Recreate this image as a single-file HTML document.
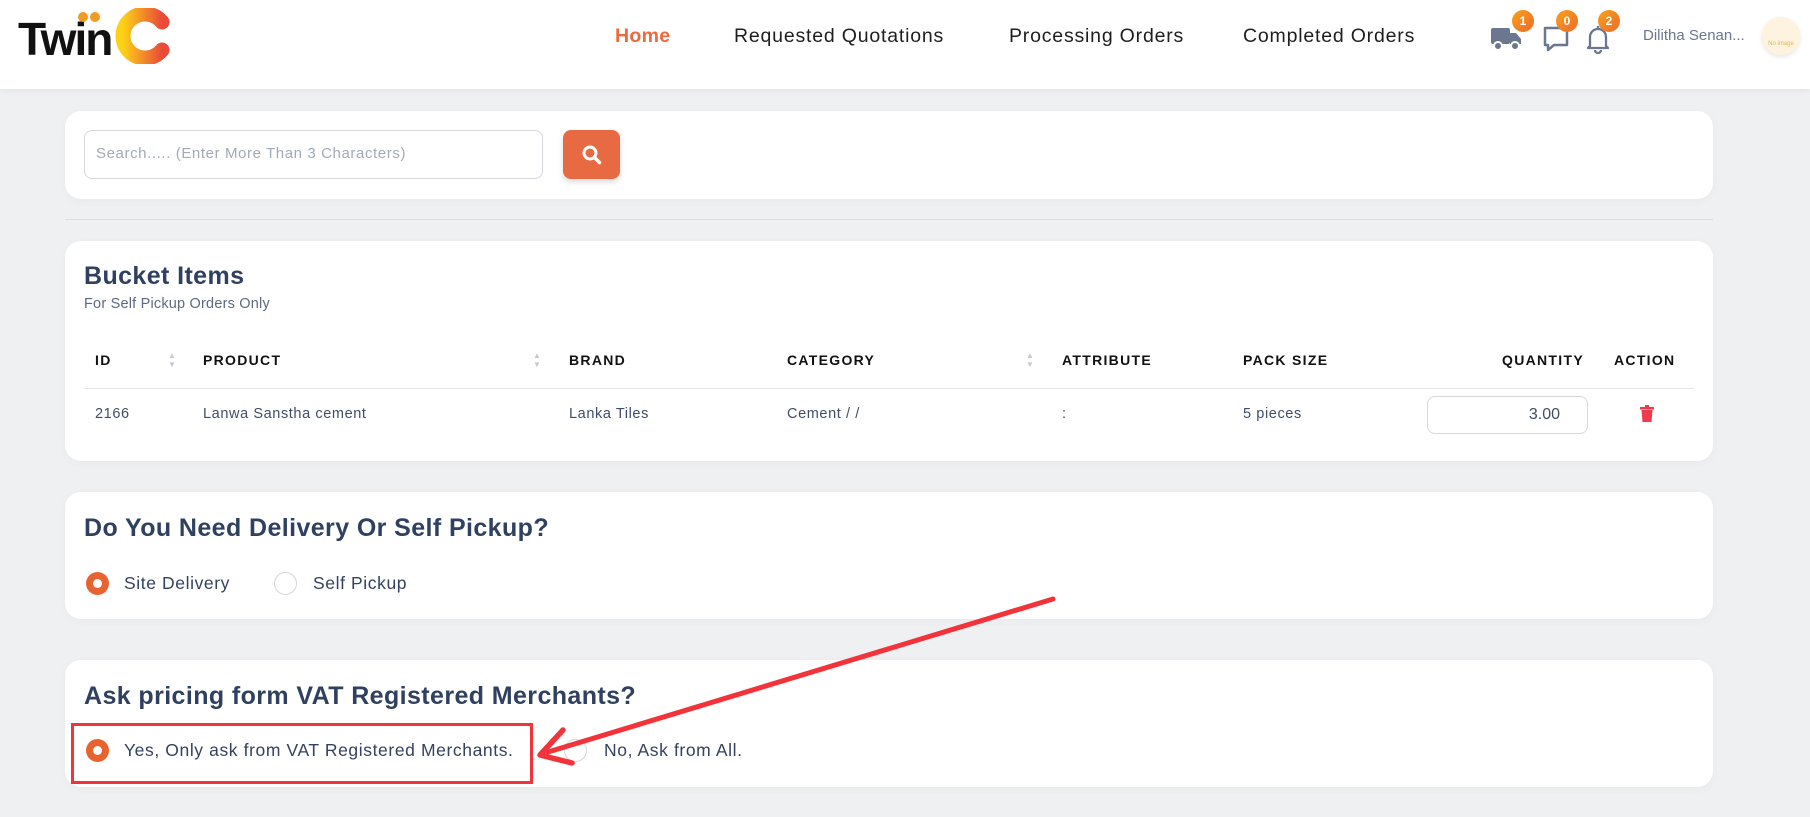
<!DOCTYPE html>
<html><head><meta charset="utf-8"><style>
*{box-sizing:border-box;margin:0;padding:0}
body{width:1810px;height:817px;overflow:hidden;background:#eff0f2;font-family:"Liberation Sans",sans-serif;color:#3a4a68;position:relative}
.hdr{position:absolute;left:0;top:0;width:1810px;height:89px;background:#fff;box-shadow:0 2px 6px rgba(0,0,0,.05)}
.nav{position:absolute;top:25px;font-size:19.5px;color:#1e1e1e;letter-spacing:.8px}
.card{position:absolute;left:65px;width:1648px;background:#fff;border-radius:16px;box-shadow:0 2px 10px rgba(0,0,0,.03)}
.abs{position:absolute}
.th{position:absolute;top:352px;font-size:14px;font-weight:bold;letter-spacing:1.3px;color:#111}
.td{position:absolute;top:406px;font-size:14.5px;color:#3f4d6b;letter-spacing:.6px}
.sort{position:absolute;top:351px;width:10px;color:#c5c8ce;font-size:8px;line-height:9px}
.title{position:absolute;left:84px;font-size:25px;font-weight:bold;color:#2f4060;letter-spacing:.4px}
.radio{position:absolute;width:23px;height:23px;border-radius:50%;border:1px solid #d3d7de;background:#fff}
.radio.on{background:#e8632f;border:none}
.radio.on::after{content:"";position:absolute;left:7px;top:7px;width:9px;height:9px;border-radius:50%;background:#fff}
.lbl{position:absolute;font-size:17.5px;color:#34425f;letter-spacing:.6px}
.badge{position:absolute;top:10px;width:22px;height:22px;border-radius:50%;background:linear-gradient(135deg,#f6a21c,#ee6a2a);color:#fff;font-size:12px;font-weight:bold;text-align:center;line-height:22px}
</style></head><body>
<div class="hdr">
  <div class="abs" style="left:18px;top:14px;font-size:46px;font-weight:bold;color:#111;letter-spacing:-2px;line-height:50px">Twin</div>
  <div class="abs" style="left:78px;top:12px;width:10px;height:10px;border-radius:50%;background:#f29a23"></div>
  <div class="abs" style="left:90px;top:12px;width:10px;height:10px;border-radius:50%;background:#f29a23"></div>
  <svg class="abs" style="left:112px;top:8px" width="58" height="56" viewBox="0 0 58 56"><defs><linearGradient id="g" x1="0" x2="1"><stop offset="0" stop-color="#fcd116"/><stop offset="1" stop-color="#ea4a3a"/></linearGradient></defs><path d="M50 14 A22 22 0 1 0 50 42" fill="none" stroke="url(#g)" stroke-width="15" stroke-linecap="round"/></svg>
  <div class="nav" style="left:615px;color:#ec6a3d;font-weight:bold;letter-spacing:.3px">Home</div>
  <div class="nav" style="left:734px">Requested Quotations</div>
  <div class="nav" style="left:1009px">Processing Orders</div>
  <div class="nav" style="left:1243px">Completed Orders</div>
  <svg class="abs" style="left:1490px;top:26px" width="32" height="26" viewBox="0 0 32 26"><rect x="1" y="2" width="19" height="16" rx="2" fill="#6b7690"/><path d="M20 7h6l5 6v5H20z" fill="#6b7690"/><circle cx="8" cy="20" r="4" fill="#6b7690" stroke="#fff" stroke-width="2"/><circle cx="25" cy="20" r="4" fill="#6b7690" stroke="#fff" stroke-width="2"/></svg>
  <div class="badge" style="left:1512px">1</div>
  <svg class="abs" style="left:1542px;top:25px" width="28" height="28" viewBox="0 0 28 28"><path d="M3 3h22v17H12l-6 5v-5H3z" fill="none" stroke="#6b7690" stroke-width="2.5" stroke-linejoin="round"/></svg>
  <div class="badge" style="left:1556px">0</div>
  <svg class="abs" style="left:1586px;top:24px" width="24" height="30" viewBox="0 0 24 30"><path d="M4 22V13a8 8 0 0 1 16 0v9l2 2H2z" fill="none" stroke="#6b7690" stroke-width="2.3" stroke-linejoin="round"/><path d="M9 26a3 3 0 0 0 6 0" fill="none" stroke="#6b7690" stroke-width="2.3"/><path d="M12 2v3" stroke="#6b7690" stroke-width="2.3"/></svg>
  <div class="badge" style="left:1598px">2</div>
  <div class="abs" style="left:1643px;top:27px;font-size:15px;color:#6b7690">Dilitha Senan...</div>
  <div class="abs" style="left:1762px;top:17px;width:38px;height:38px;border-radius:50%;background:#fdf3df;box-shadow:0 2px 5px rgba(0,0,0,.1);font-size:6px;color:#e7b84a;text-align:center;padding-top:24px">No image</div>
</div>

<div class="card" style="top:111px;height:88px"></div>
<div class="abs" style="left:84px;top:130px;width:459px;height:49px;border:1px solid #d6d8de;border-radius:8px;background:#fff;font-size:15px;color:#a3a9b6;padding:14px 11px;letter-spacing:.6px">Search..... (Enter More Than 3 Characters)</div>
<div class="abs" style="left:563px;top:130px;width:57px;height:49px;border-radius:8px;background:#e86a43;box-shadow:0 3px 6px rgba(0,0,0,.15)">
<svg style="position:absolute;left:18px;top:14px" width="22" height="22" viewBox="0 0 22 22"><circle cx="9" cy="9" r="6" fill="none" stroke="#fff" stroke-width="3"/><path d="M13.5 13.5l5 5" stroke="#fff" stroke-width="3.5" stroke-linecap="round"/></svg></div>
<div class="abs" style="left:65px;top:219px;width:1648px;height:1px;background:#dcdee2"></div>

<div class="card" style="top:241px;height:220px"></div>
<div class="title" style="top:262px">Bucket Items</div>
<div class="abs" style="left:84px;top:296px;font-size:14.5px;color:#5d6a85;letter-spacing:.2px">For Self Pickup Orders Only</div>
<div class="th" style="left:95px">ID</div>
<div class="sort" style="left:168px">▲<br>▼</div>
<div class="th" style="left:203px">PRODUCT</div>
<div class="sort" style="left:533px">▲<br>▼</div>
<div class="th" style="left:569px">BRAND</div>
<div class="th" style="left:787px">CATEGORY</div>
<div class="sort" style="left:1026px">▲<br>▼</div>
<div class="th" style="left:1062px">ATTRIBUTE</div>
<div class="th" style="left:1243px">PACK SIZE</div>
<div class="th" style="left:1502px">QUANTITY</div>
<div class="th" style="left:1614px">ACTION</div>
<div class="abs" style="left:84px;top:388px;width:1610px;height:1px;background:#e4e6ea"></div>
<div class="td" style="left:95px">2166</div>
<div class="td" style="left:203px">Lanwa Sanstha cement</div>
<div class="td" style="left:569px">Lanka Tiles</div>
<div class="td" style="left:787px">Cement / /</div>
<div class="td" style="left:1062px">:</div>
<div class="td" style="left:1243px">5 pieces</div>
<div class="abs" style="left:1427px;top:396px;width:161px;height:38px;border:1px solid #d6d8de;border-radius:8px;text-align:right;padding:9px 27px 0 0;font-size:16px;color:#3f4d6b">3.00</div>
<svg class="abs" style="left:1640px;top:405px" width="14" height="17" viewBox="0 0 14 17"><rect x="0" y="2" width="14" height="2.5" fill="#f0394a"/><rect x="5" y="0" width="4" height="3" fill="#f0394a"/><path d="M1.5 5h11l-1 12h-9z" fill="#f0394a"/></svg>

<div class="card" style="top:492px;height:127px"></div>
<div class="title" style="top:514px">Do You Need Delivery Or Self Pickup?</div>
<div class="radio on" style="left:86px;top:572px"></div>
<div class="lbl" style="left:124px;top:573px">Site Delivery</div>
<div class="radio" style="left:274px;top:572px"></div>
<div class="lbl" style="left:313px;top:573px">Self Pickup</div>

<div class="card" style="top:660px;height:127px"></div>
<div class="title" style="top:682px">Ask pricing form VAT Registered Merchants?</div>
<div class="radio on" style="left:86px;top:739px"></div>
<div class="lbl" style="left:124px;top:740px">Yes, Only ask from VAT Registered Merchants.</div>
<div class="radio" style="left:564px;top:739px"></div>
<div class="lbl" style="left:604px;top:740px">No, Ask from All.</div>
<div class="abs" style="left:71px;top:723px;width:462px;height:61px;border:3.5px solid #f2343a"></div>
<svg class="abs" style="left:0;top:0" width="1810" height="817"><path d="M1053 599L548 752" stroke="#f2343a" stroke-width="5" stroke-linecap="round"/><path d="M563 730L540 755L572 763" fill="none" stroke="#f2343a" stroke-width="5.5" stroke-linecap="round" stroke-linejoin="round"/></svg>
</body></html>
